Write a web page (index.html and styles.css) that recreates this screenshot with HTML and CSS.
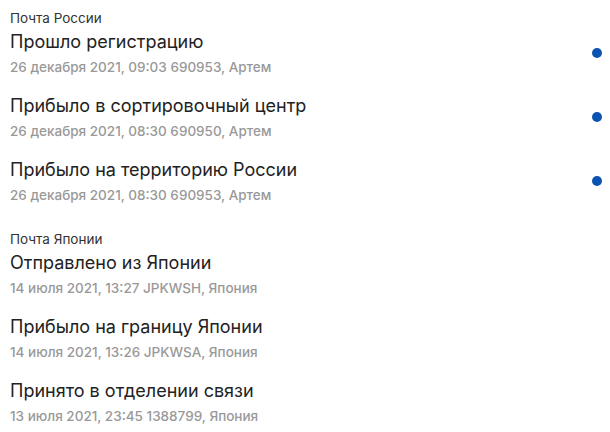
FILE: index.html
```html
<!DOCTYPE html>
<html lang="ru">
<head>
  <meta charset="UTF-8">
  <title>Отслеживание</title>
  <link rel="stylesheet" href="styles.css">
</head>
<body>
  <div class="track">
    <div class="track-group">
      <div class="track-label">Почта России</div>
      <div class="track-item">
        <div class="track-text">
          <div class="track-title">Прошло регистрацию</div>
          <div class="track-meta">26 декабря 2021, 09:03 690953, Артем</div>
        </div>
        <span class="track-dot"></span>
      </div>
      <div class="track-item">
        <div class="track-text">
          <div class="track-title">Прибыло в сортировочный центр</div>
          <div class="track-meta">26 декабря 2021, 08:30 690950, Артем</div>
        </div>
        <span class="track-dot"></span>
      </div>
      <div class="track-item">
        <div class="track-text">
          <div class="track-title">Прибыло на территорию России</div>
          <div class="track-meta">26 декабря 2021, 08:30 690953, Артем</div>
        </div>
        <span class="track-dot"></span>
      </div>
    </div>
    <div class="track-group">
      <div class="track-label">Почта Японии</div>
      <div class="track-item">
        <div class="track-text">
          <div class="track-title">Отправлено из Японии</div>
          <div class="track-meta">14 июля 2021, 13:27 JPKWSH, Япония</div>
        </div>
      </div>
      <div class="track-item">
        <div class="track-text">
          <div class="track-title">Прибыло на границу Японии</div>
          <div class="track-meta">14 июля 2021, 13:26 JPKWSA, Япония</div>
        </div>
      </div>
      <div class="track-item">
        <div class="track-text">
          <div class="track-title">Принято в отделении связи</div>
          <div class="track-meta">13 июля 2021, 23:45 1388799, Япония</div>
        </div>
      </div>
    </div>
  </div>
</body>
</html>
```

FILE: styles.css
```css
*,
*::before,
*::after {
  margin: 0;
  padding: 0;
  box-sizing: border-box;
}
body {
  font-family: Inter, "Noto Sans", sans-serif;
  background: #fff;
  color: #222;
}
.track {
  padding: 10px 8px 0 10px;
}
.track-group + .track-group {
  margin-top: 9px;
}
.track-label {
  margin-bottom: 4px;
  font-size: 13.5px;
  line-height: 16px;
  color: #333;
}
.track-item {
  display: flex;
  align-items: center;
  height: 64px;
  padding-bottom: 18px;
}
.track-text {
  flex: 1;
}
.track-title {
  font-size: 18px;
  line-height: 24px;
  color: #222;
}
.track-meta {
  margin-top: 4px;
  font-size: 13.5px;
  line-height: 18px;
  font-weight: 500;
  color: #999;
}
.track-dot {
  width: 10px;
  height: 10px;
  border-radius: 50%;
  background: #0a54b0;
}
```
